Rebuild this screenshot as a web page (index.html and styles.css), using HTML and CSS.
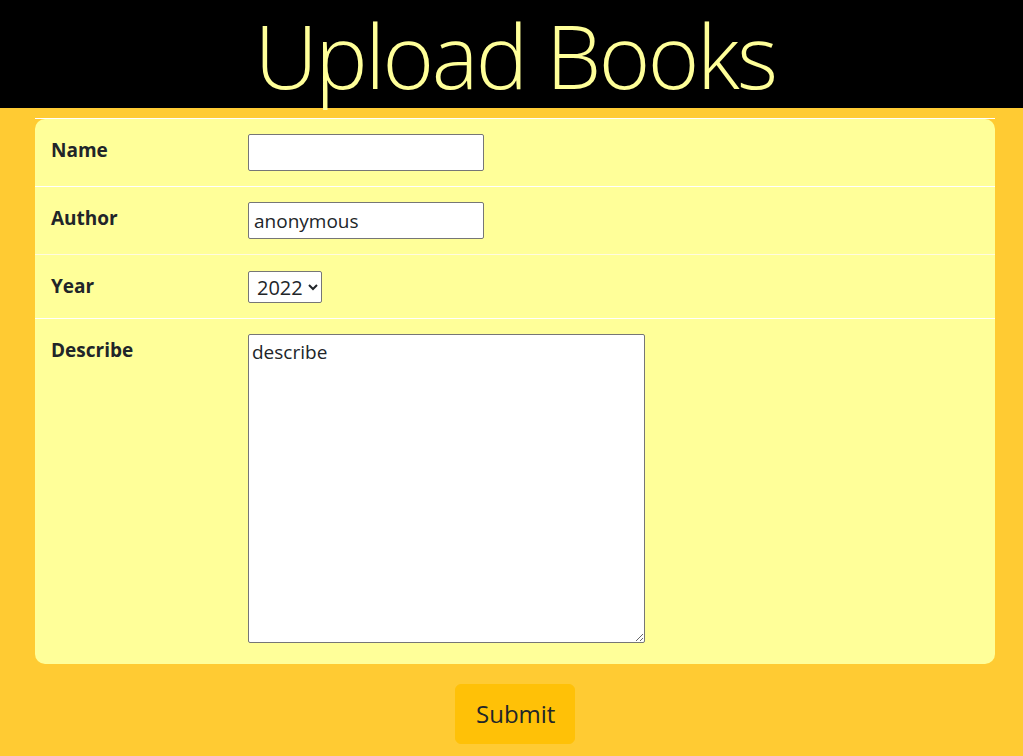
FILE: index.html
```html
<!DOCTYPE html>
<html lang="en">
<head>
<meta charset="utf-8">
<title>Upload Books</title>
<link rel="stylesheet" href="styles.css">
</head>
<body>
<header class="masthead">
  <h1 class="title">Upload Books</h1>
</header>
<main class="page">
  <form class="upload-form">
    <div class="card">
      <div class="row">
        <label class="label" for="name">Name</label>
        <div class="field"><input class="text-input" id="name" type="text"></div>
      </div>
      <div class="row row-soft">
        <label class="label" for="author">Author</label>
        <div class="field"><input class="text-input" id="author" type="text" value="anonymous"></div>
      </div>
      <div class="row">
        <label class="label" for="year">Year</label>
        <div class="field">
          <select class="select" id="year">
            <option>2022</option>
            <option>2021</option>
            <option>2020</option>
          </select>
        </div>
      </div>
      <div class="row row-last">
        <label class="label" for="describe">Describe</label>
        <div class="field"><textarea class="textarea" id="describe">describe</textarea></div>
      </div>
    </div>
    <div class="actions">
      <button class="submit" type="submit">Submit</button>
    </div>
  </form>
</main>
</body>
</html>
```

FILE: styles.css
```css
html, body {
  margin: 0;
  padding: 0;
}

body {
  background: #ffcb33;
  font-family: "Segoe UI", "Open Sans", "Noto Sans", sans-serif;
  color: #212529;
  font-size: 19px;
  line-height: 1.5;
}

.masthead {
  background: #000;
  height: 108px;
  padding-left: 7px;
  display: flex;
  justify-content: center;
  align-items: flex-start;
}

.title {
  margin: 0;
  padding-top: 3px;
  font-family: "Open Sans", sans-serif;
  font-weight: 300;
  font-size: 88px;
  line-height: 105px;
  color: #ffff99;
  letter-spacing: -2.5px;
  white-space: nowrap;
}

.page {
  padding: 10px 28px 12px 35px;
}

.upload-form {
  border-top: 1px solid #fff;
}

.card {
  background: #ffff99;
  border-radius: 10px;
}

.row {
  display: grid;
  grid-template-columns: 213px 1fr;
  border-bottom: 1px solid #fff;
}

.row-soft {
  border-bottom-color: #fffbe0;
}

.row-last {
  border-bottom: none;
}

.label {
  padding: 16px 16px 14px;
  font-weight: 700;
  line-height: 30px;
}

.field {
  padding: 15px 0;
}

.row-last .field {
  padding-bottom: 21px;
}

.text-input {
  display: block;
  box-sizing: border-box;
  width: 236px;
  height: 37px;
  margin: 0;
  padding: 1px 5px;
  border: 1px solid #767676;
  border-radius: 2px;
  background: #fff;
  font-family: inherit;
  font-size: 19px;
  color: #212529;
}

.select {
  display: block;
  box-sizing: border-box;
  height: 32px;
  width: 74px;
  margin: 1px 0 0;
  padding: 0 2px 0 4px;
  border: 1px solid #767676;
  border-radius: 2px;
  background: #fff;
  font-family: inherit;
  font-size: 20px;
  color: #212529;
}

.textarea {
  display: block;
  box-sizing: border-box;
  width: 397px;
  height: 309px;
  margin: 0;
  padding: 6px 3px;
  border: 1px solid #767676;
  border-radius: 2px;
  background: #fff;
  font-family: inherit;
  font-size: 19px;
  line-height: 1.25;
  color: #212529;
}

.actions {
  display: flex;
  justify-content: center;
  padding-top: 20px;
}

.submit {
  background: #ffc107;
  border: 1px solid #ffc107;
  border-radius: 6px;
  padding: 10px 20px;
  font-family: inherit;
  font-size: 24px;
  line-height: 1.5;
  color: #212529;
  width: 120px;
  height: 60px;
}
```
